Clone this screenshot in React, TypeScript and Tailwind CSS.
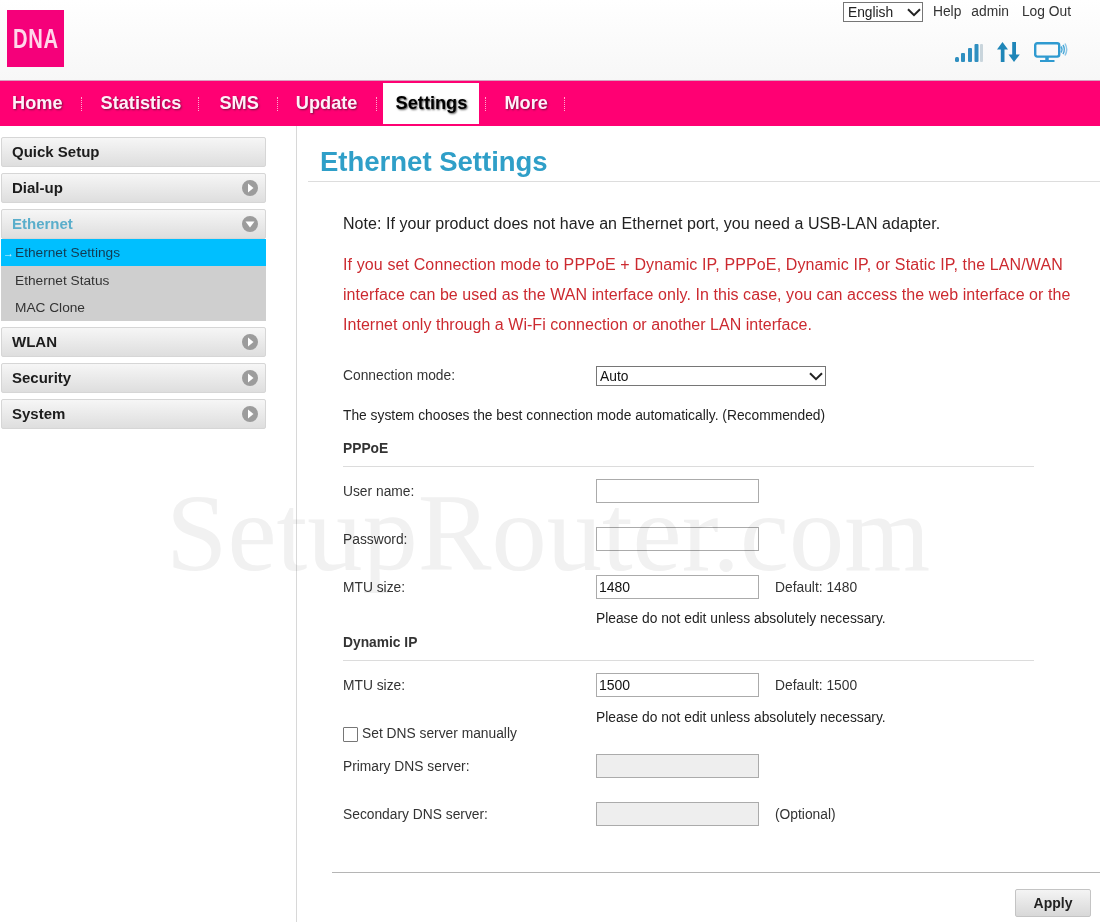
import React from "react";

const navItems = [
  { label: "Home", margin: "ml-[12px] mr-[18px]" },
  { label: "Statistics", margin: "ml-[19px] mr-[17px]" },
  { label: "SMS", margin: "ml-[20px] mr-[18px]" },
  { label: "Update", margin: "ml-[18px] mr-[19px]" },
  { label: "Settings", margin: "" },
  { label: "More", margin: "ml-[18px] mr-[16px]" },
];

function NavSep() {
  return <span className="h-[14px] w-0 border-l border-dotted border-[#ffa8cf]" />;
}

function SignalIcon() {
  return (
    <svg width="28" height="20" viewBox="0 0 28 20">
      <rect x="0" y="15" width="4" height="5" rx="1.5" fill="#2f8fc0" />
      <rect x="6" y="11" width="4" height="9" rx="1" fill="#2f8fc0" />
      <rect x="13" y="6" width="4" height="14" rx="1" fill="#2f8fc0" />
      <rect x="19.5" y="2" width="4" height="18" rx="1" fill="#2f8fc0" />
      <rect x="25" y="2" width="3" height="18" rx="1" fill="#c9d5dc" />
    </svg>
  );
}

function ArrowsIcon() {
  return (
    <svg width="23" height="20" viewBox="0 0 23 20" fill="#1f86b8">
      <path d="M5.5 0 L11 7.5 L7.5 7.5 L7.5 20 L3.8 20 L3.8 7.5 L0 7.5 Z" />
      <path d="M15.2 0 L19 0 L19 12.5 L22.8 12.5 L17 20 L11.5 12.5 L15.2 12.5 Z" />
    </svg>
  );
}

function MonitorIcon() {
  return (
    <svg width="34" height="20" viewBox="0 0 34 20" fill="none">
      <rect x="1.2" y="1.2" width="24" height="13.4" rx="2" stroke="#2f9ad0" strokeWidth="2.4" />
      <path d="M13 15 V18" stroke="#2f9ad0" strokeWidth="3.5" />
      <path d="M6 19 H20.5" stroke="#2f9ad0" strokeWidth="2" />
      <path d="M27 4.5 Q29 7.5 27 10.5" stroke="#4aa8d8" strokeWidth="1.5" />
      <path d="M29 3 Q31.6 7.5 29 12" stroke="#4aa8d8" strokeWidth="1.5" />
      <path d="M31 1.5 Q34.4 7.5 31 13.5" stroke="#8cc6e6" strokeWidth="1.5" />
    </svg>
  );
}

function SelectChevron({ className }: { className: string }) {
  return (
    <svg className={`pointer-events-none absolute ${className}`} width="14" height="9" viewBox="0 0 14 9" fill="none">
      <path d="M1 1.2 L7 7.2 L13 1.2" stroke="#222" strokeWidth="2" />
    </svg>
  );
}

function Chevron({ open }: { open?: boolean }) {
  return (
    <span className="flex h-4 w-4 items-center justify-center rounded-full bg-[#9c9c9c]">
      {open ? (
        <svg width="10" height="7" viewBox="0 0 10 7">
          <path d="M0.5 0.5 H9.5 L5 6.5 Z" fill="#fff" />
        </svg>
      ) : (
        <svg width="7" height="10" viewBox="0 0 7 10">
          <path d="M1 0.5 V9.5 L6.5 5 Z" fill="#fff" />
        </svg>
      )}
    </span>
  );
}

function MenuHead({ label, arrow = true, open, active }: { label: string; arrow?: boolean; open?: boolean; active?: boolean }) {
  return (
    <div className="flex h-[30px] items-center justify-between rounded-[2px] border border-[#d6d6d6] bg-gradient-to-b from-[#f6f6f6] to-[#dedede] pl-[10px] pr-[7px]">
      <span className={`pt-[1px] text-[15px] font-bold ${active ? "text-[#5aaecb]" : "text-[#1c1c1c]"}`}>{label}</span>
      {arrow && <Chevron open={open} />}
    </div>
  );
}

function Sidebar() {
  return (
    <aside className="ml-[1px] mt-[11px] flex w-[265px] shrink-0 flex-col gap-[6px]">
      <MenuHead label="Quick Setup" arrow={false} />
      <MenuHead label="Dial-up" />
      <div>
        <MenuHead label="Ethernet" open active />
        <div className="bg-[#cfcfcf] text-[13.7px] text-[#333]">
          <div className="flex h-[27px] items-center bg-[#00bfff] pl-[2px] pt-[2px] text-[#123a52]">
            <span className="w-[12px] text-[11px] leading-none text-[#d8f4ff]">→</span>
            <span>Ethernet Settings</span>
          </div>
          <div className="flex h-[28px] items-center pl-[14px] pt-[2px]">Ethernet Status</div>
          <div className="flex h-[27px] items-center pl-[14px] pt-[2px]">MAC Clone</div>
        </div>
      </div>
      <MenuHead label="WLAN" />
      <MenuHead label="Security" />
      <MenuHead label="System" />
    </aside>
  );
}

function Row({ label, value, disabled, note, className }: { label: string; value?: string; disabled?: boolean; note?: string; className?: string }) {
  return (
    <div className={`flex h-6 items-center ${className ?? ""}`}>
      <span className="w-[253px] shrink-0 pt-[2px] text-[#333]">{label}</span>
      <input
        readOnly
        disabled={disabled}
        value={value ?? ""}
        className={`h-6 w-[163px] border border-[#ababab] px-[2px] text-[14px] text-[#111] outline-none ${disabled ? "bg-[#eeeeee]" : "bg-white"}`}
      />
      {note && <span className="ml-[16px] pt-[2px] text-[#333]">{note}</span>}
    </div>
  );
}

function SectionHead({ title, className }: { title: string; className?: string }) {
  return (
    <div className={`h-[28px] border-b border-[#dcdcdc] font-bold leading-[20px] text-[#333] ${className ?? ""}`}>{title}</div>
  );
}

function EthernetForm() {
  return (
    <div className="ml-[46px] text-[13.8px] leading-[20px]">
      <p className="mt-[32px] text-[16px] leading-[20px] tracking-[0.05px] text-[#222]">
        Note: If your product does not have an Ethernet port, you need a USB-LAN adapter.
      </p>
      <p className="mt-[16px] w-[740px] text-[16px] leading-[30px] text-[#cc2a30]">
        <span className="block tracking-[0.12px]">If you set Connection mode to PPPoE + Dynamic IP, PPPoE, Dynamic IP, or Static IP, the LAN/WAN</span>
        <span className="block tracking-[0.06px]">interface can be used as the WAN interface only. In this case, you can access the web interface or the</span>
        <span className="block tracking-[0.03px]">Internet only through a Wi-Fi connection or another LAN interface.</span>
      </p>

      <div className="mt-[26px] flex h-5 items-center">
        <span className="w-[253px] shrink-0 text-[#333]">Connection mode:</span>
        <div className="relative h-5 w-[230px]">
          <select className="h-5 w-full appearance-none border border-[#767676] bg-white pl-[3px] text-[13.8px] text-[#111]">
            <option>Auto</option>
          </select>
          <SelectChevron className="right-[3px] top-[6px]" />
        </div>
      </div>
      <p className="mt-[20px] text-[#222]">The system chooses the best connection mode automatically. (Recommended)</p>

      <div className="w-[691px]">
        <SectionHead title="PPPoE" className="mt-[13px]" />
        <Row label="User name:" className="mt-[12px]" />
        <Row label="Password:" className="mt-[24px]" />
        <Row label="MTU size:" value="1480" note="Default: 1480" className="mt-[24px]" />
        <p className="ml-[253px] mt-[10px] text-[#222]">Please do not edit unless absolutely necessary.</p>
        <SectionHead title="Dynamic IP" className="mt-[4px]" />
        <Row label="MTU size:" value="1500" note="Default: 1500" className="mt-[12px]" />
        <p className="ml-[253px] mt-[11px] text-[#222]">Please do not edit unless absolutely necessary.</p>
        <label className="mt-[-6px] flex h-6 items-center">
          <span className="h-[15px] w-[15px] rounded-[1px] border border-[#767676] bg-white" />
          <span className="ml-[4px] text-[#333]">Set DNS server manually</span>
        </label>
        <Row label="Primary DNS server:" disabled className="mt-[8px]" />
        <Row label="Secondary DNS server:" disabled note="(Optional)" className="mt-[24px]" />
      </div>
    </div>
  );
}

export default function App() {
  return (
    <div className="relative flex h-[922px] w-[1100px] flex-col overflow-hidden bg-white font-['Liberation_Sans',Arial,sans-serif]">
      {/* Header */}
      <header className="flex h-[80px] shrink-0 justify-between bg-gradient-to-b from-white to-[#f7f7f7] pl-[7px] pr-[29px]">
        <div className="mt-[10px] flex h-[57px] w-[57px] items-center justify-center overflow-hidden bg-[#f5007a]">
          <span className="scale-x-[0.72] text-[28px] font-bold leading-none tracking-[1px] text-[#ffd6ea]">DNA</span>
        </div>
        <div className="flex flex-col items-end">
          <div className="mt-[2px] flex h-5 items-center text-[13.8px] text-[#333]">
            <div className="relative h-5 w-[80px]">
              <select className="h-5 w-full appearance-none border border-[#767676] bg-white pl-[4px] text-[13.8px] text-[#222]">
                <option>English</option>
              </select>
              <SelectChevron className="right-[2px] top-[6px]" />
            </div>
            <span className="ml-[10px]">Help</span>
            <span className="ml-[10px]">admin</span>
            <span className="ml-[13px]">Log Out</span>
          </div>
          <div className="mr-[3px] mt-[20px] flex items-center">
            <SignalIcon />
            <span className="ml-[14px]"><ArrowsIcon /></span>
            <span className="ml-[14px]"><MonitorIcon /></span>
          </div>
        </div>
      </header>

      {/* Nav bar */}
      <nav className="flex h-[46px] shrink-0 items-center border-t border-[#d8a0bf] bg-[#ff0073] text-[18.2px] font-bold text-[#fff0f8]">
        {navItems.map((item) => (
          <React.Fragment key={item.label}>
            {item.label === "Settings" ? (
              <span className="mx-[6px] flex h-[41px] w-[96px] items-center justify-center bg-white pt-[1px] text-black [text-shadow:1px_1px_2px_#555]">
                {item.label}
              </span>
            ) : (
              <span className={`${item.margin} pt-[1px] [text-shadow:1px_1px_2px_#7a1040]`}>{item.label}</span>
            )}
            <NavSep />
          </React.Fragment>
        ))}
      </nav>

      {/* Body */}
      <div className="flex min-h-0 flex-1">
        <Sidebar />
        <main className="relative ml-[30px] flex-1 border-l border-[#d8d8d8]">
          <div className="ml-[11px] h-[56px] border-b border-[#dddddd] pl-[12px] pt-[19px]">
            <h1 className="text-[27.5px] font-bold leading-[34px] text-[#2f9fc8]">Ethernet Settings</h1>
          </div>
          <EthernetForm />
          <div className="ml-[35px] mt-[46px] border-t border-[#b5b5b5]" />
          <div className="mt-[16px] flex justify-end pr-[9px]">
            <button className="h-[28px] w-[76px] rounded-[2px] border border-[#c4c4c4] bg-gradient-to-b from-[#f4f4f4] to-[#d8d8d8] text-[14px] font-bold text-[#222]">
              Apply
            </button>
          </div>
        </main>
      </div>

      {/* SetupRouter watermark */}
      <div className="pointer-events-none absolute left-[166px] top-[475px] font-['Liberation_Serif',serif] text-[110.5px] leading-[116px] text-[#f1f1f1] mix-blend-multiply">
        SetupRouter.com
      </div>
    </div>
  );
}
